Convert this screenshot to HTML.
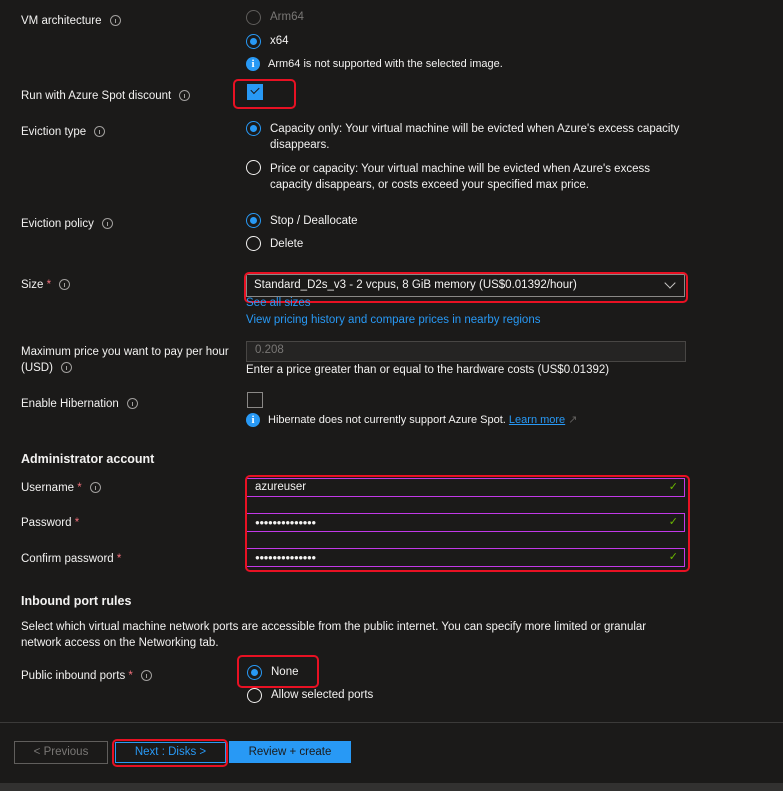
<!DOCTYPE html>
<html><head><meta charset="utf-8"><style>
body{margin:0;width:783px;height:791px;background:#1b1a19;font-family:"Liberation Sans",sans-serif;font-size:11.5px;color:#f3f2f1;position:relative;overflow:hidden}
.a{position:absolute;white-space:nowrap;line-height:16px}
.i{display:inline-block;width:9px;height:9px;border:1px solid #a19f9d;border-radius:50%;vertical-align:-2px;margin-left:8px;position:relative}
.i:after{content:"";position:absolute;left:4px;top:3px;width:1px;height:4px;background:#a19f9d}
.r{position:absolute;width:13px;height:13px;border:1px solid #f3f2f1;border-radius:50%}
.r.on{border-color:#2899f5}
.r.on:after{content:"";position:absolute;left:3px;top:3px;width:7px;height:7px;border-radius:50%;background:#2899f5}
.r.dis{border-color:#605e5c}
.red{position:absolute;border:2px solid #e81123;border-radius:5px}
.bi{position:absolute;width:14px;height:14px;border-radius:50%;background:#2899f5;color:#fff;font-size:11px;font-weight:bold;text-align:center;line-height:14px;font-family:"Liberation Serif",serif}
.inp{position:absolute;border:1px solid #c239e8;background:#1b1a19;height:17px}
.chk{position:absolute;right:6px;top:1px;color:#6bb700;font-size:11px}
.star{color:#f1707b}
.lk{color:#2899f5}
.dots{position:absolute;left:8px;top:1px;font-size:8px;letter-spacing:-0.5px;line-height:16px}
b{font-weight:bold}
</style></head><body>
<div class="a" style="left:21px;top:13px">VM architecture<span class="i"></span></div>
<div class="r dis" style="left:246px;top:10px"></div><div class="a" style="left:270px;top:9px;color:#797775">Arm64</div>
<div class="r on" style="left:246px;top:34px"></div><div class="a" style="left:270px;top:33px">x64</div>
<div class="bi" style="left:246px;top:57px">i</div><div class="a" style="left:268px;top:56px;font-size:11px">Arm64 is not supported with the selected image.</div>

<div class="a" style="left:21px;top:88px">Run with Azure Spot discount<span class="i"></span></div>
<div style="position:absolute;left:247px;top:84px;width:16px;height:16px;background:#2899f5"></div>
<div style="position:absolute;left:251px;top:87px;width:7px;height:4px;border-left:1px solid #1b1a19;border-bottom:1px solid #1b1a19;transform:rotate(-45deg)"></div>
<div class="red" style="left:233px;top:79px;width:59px;height:26px"></div>

<div class="a" style="left:21px;top:124px">Eviction type<span class="i"></span></div>
<div class="r on" style="left:246px;top:121px"></div>
<div class="a" style="left:270px;top:121px">Capacity only: Your virtual machine will be evicted when Azure's excess capacity<br>disappears.</div>
<div class="r" style="left:246px;top:160px"></div>
<div class="a" style="left:270px;top:161px">Price or capacity: Your virtual machine will be evicted when Azure's excess<br>capacity disappears, or costs exceed your specified max price.</div>

<div class="a" style="left:21px;top:216px">Eviction policy<span class="i"></span></div>
<div class="r on" style="left:246px;top:213px"></div><div class="a" style="left:270px;top:213px">Stop / Deallocate</div>
<div class="r" style="left:246px;top:236px"></div><div class="a" style="left:270px;top:236px">Delete</div>

<div class="a" style="left:21px;top:277px">Size <span class="star">*</span><span class="i"></span></div>
<div style="position:absolute;left:246px;top:274px;width:437px;height:21px;border:1px solid #8a8886"></div>
<div class="a" style="left:254px;top:277px">Standard_D2s_v3 - 2 vcpus, 8 GiB memory (US$0.01392/hour)</div>
<div style="position:absolute;left:666px;top:279px;width:7px;height:7px;border-right:1.5px solid #c8c6c4;border-bottom:1.5px solid #c8c6c4;transform:rotate(45deg)"></div>
<div class="red" style="left:244px;top:272px;width:440px;height:27px"></div>
<div class="a lk" style="left:246px;top:295px">See all sizes</div>
<div class="a lk" style="left:246px;top:312px">View pricing history and compare prices in nearby regions</div>

<div class="a" style="left:21px;top:344px">Maximum price you want to pay per hour<br>(USD)<span class="i"></span></div>
<div style="position:absolute;left:246px;top:341px;width:438px;height:19px;border:1px solid #484644;background:#252423"></div>
<div class="a" style="left:255px;top:342px;color:#797775">0.208</div>
<div class="a" style="left:246px;top:362px">Enter a price greater than or equal to the hardware costs (US$0.01392)</div>

<div class="a" style="left:21px;top:396px">Enable Hibernation<span class="i"></span></div>
<div style="position:absolute;left:247px;top:392px;width:14px;height:14px;border:1px solid #8a8886"></div>
<div class="bi" style="left:246px;top:413px">i</div>
<div class="a" style="left:268px;top:412px;font-size:11px">Hibernate does not currently support Azure Spot. <span class="lk" style="text-decoration:underline">Learn more</span> <span style="color:#605e5c">↗</span></div>

<div class="a" style="left:21px;top:451px;font-size:12.5px"><b>Administrator account</b></div>
<div class="a" style="left:21px;top:480px">Username <span class="star">*</span><span class="i"></span></div>
<div class="inp" style="left:246px;top:478px;width:437px"><div class="a" style="left:8px;top:0">azureuser</div><span class="chk">✓</span></div>
<div class="a" style="left:21px;top:515px">Password <span class="star">*</span></div>
<div class="inp" style="left:246px;top:513px;width:437px"><div class="dots">●●●●●●●●●●●●●●</div><span class="chk">✓</span></div>
<div class="a" style="left:21px;top:551px">Confirm password <span class="star">*</span></div>
<div class="inp" style="left:246px;top:548px;width:437px"><div class="dots">●●●●●●●●●●●●●●</div><span class="chk">✓</span></div>
<div class="red" style="left:245px;top:475px;width:441px;height:93px"></div>

<div class="a" style="left:21px;top:593px;font-size:12.5px"><b>Inbound port rules</b></div>
<div class="a" style="left:21px;top:619px">Select which virtual machine network ports are accessible from the public internet. You can specify more limited or granular<br>network access on the Networking tab.</div>
<div class="a" style="left:21px;top:668px">Public inbound ports <span class="star">*</span><span class="i"></span></div>
<div class="r on" style="left:247px;top:665px"></div><div class="a" style="left:271px;top:664px">None</div>
<div class="r" style="left:247px;top:688px"></div><div class="a" style="left:271px;top:687px">Allow selected ports</div>
<div class="red" style="left:237px;top:655px;width:78px;height:29px"></div>

<div style="position:absolute;left:0;top:722px;width:783px;height:1px;background:#3b3a39"></div>
<div style="position:absolute;left:14px;top:741px;width:92px;height:21px;border:1px solid #605e5c;color:#797775;text-align:center;line-height:21px">&lt; Previous</div>
<div style="position:absolute;left:115px;top:742px;width:109px;height:19px;border:1px solid #2899f5;color:#2899f5;text-align:center;line-height:19px">Next : Disks &gt;</div>
<div class="red" style="left:112px;top:739px;width:112px;height:24px"></div>
<div style="position:absolute;left:229px;top:741px;width:122px;height:22px;background:#2899f5;color:#1b1a19;text-align:center;line-height:22px">Review + create</div>
<div style="position:absolute;left:0;top:783px;width:783px;height:8px;background:#323130"></div>
</body></html>
